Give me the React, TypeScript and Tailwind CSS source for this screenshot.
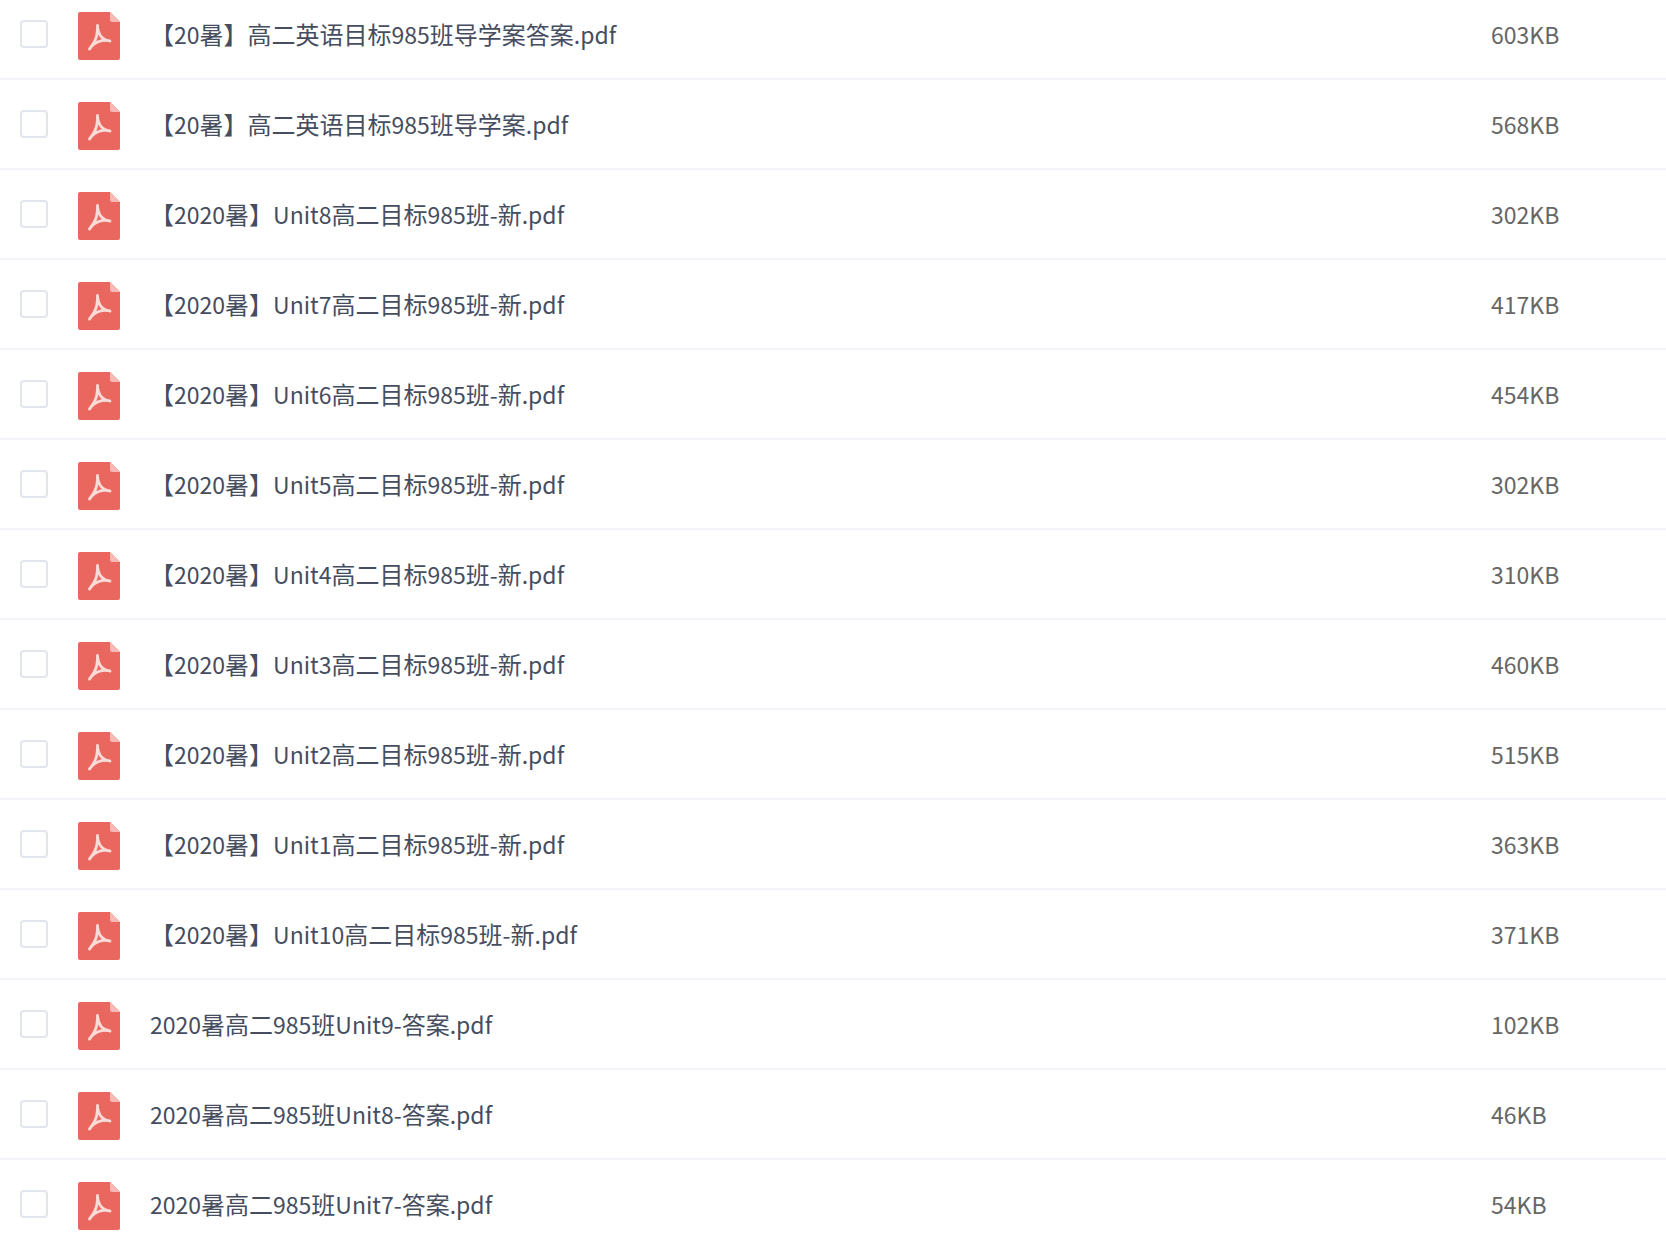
const files = [
  { name: "【20暑】高二英语目标985班导学案答案.pdf", size: "603KB" },
  { name: "【20暑】高二英语目标985班导学案.pdf", size: "568KB" },
  { name: "【2020暑】Unit8高二目标985班-新.pdf", size: "302KB" },
  { name: "【2020暑】Unit7高二目标985班-新.pdf", size: "417KB" },
  { name: "【2020暑】Unit6高二目标985班-新.pdf", size: "454KB" },
  { name: "【2020暑】Unit5高二目标985班-新.pdf", size: "302KB" },
  { name: "【2020暑】Unit4高二目标985班-新.pdf", size: "310KB" },
  { name: "【2020暑】Unit3高二目标985班-新.pdf", size: "460KB" },
  { name: "【2020暑】Unit2高二目标985班-新.pdf", size: "515KB" },
  { name: "【2020暑】Unit1高二目标985班-新.pdf", size: "363KB" },
  { name: "【2020暑】Unit10高二目标985班-新.pdf", size: "371KB" },
  { name: "2020暑高二985班Unit9-答案.pdf", size: "102KB" },
  { name: "2020暑高二985班Unit8-答案.pdf", size: "46KB" },
  { name: "2020暑高二985班Unit7-答案.pdf", size: "54KB" },
];

// latin runs sit a touch smaller than the CJK ones
function FileName({ name }: { name: string }) {
  const runs = name.match(/[\x20-\x7e]+|[^\x20-\x7e]+/g) ?? [];
  return (
    <>
      {runs.map((run, i) =>
        /^[\x20-\x7e]/.test(run) ? (
          <span key={i} className="text-[23px]">
            {run}
          </span>
        ) : (
          <span key={i}>{run}</span>
        ),
      )}
    </>
  );
}

function PdfIcon() {
  return (
    <svg width="42" height="48" viewBox="0 0 42 48" className="shrink-0">
      <path d="M2 0H32L42 10V46a2 2 0 0 1-2 2H2a2 2 0 0 1-2-2V2a2 2 0 0 1 2-2Z" fill="#ea675f" />
      <path d="M32 0L42 10H34a2 2 0 0 1-2-2Z" fill="#f6b9b5" />
      <path
        d="M19.5 13.5C19.5 22 19 28 11.5 37M19.5 13.5C20 22 24 28 32 29C26 27 17 29 11.5 37"
        fill="none"
        stroke="#fadbd8"
        strokeWidth="2.8"
        strokeLinecap="round"
        strokeLinejoin="round"
      />
    </svg>
  );
}

export default function App() {
  return (
    <div className="h-[1244px] overflow-hidden bg-white font-['Noto_Sans_CJK_SC',sans-serif]">
      <div className="-mt-[10px]">
        {files.map((f, i) => (
          <div key={i} className="flex h-[90px] items-center border-b-2 border-[#f3f4f7] pt-1">
            <div className="ml-5 mb-[5px] h-7 w-7 shrink-0 rounded-[4px] border-2 border-[#e2e5ec] bg-white" />
            <div className="ml-[30px]">
              <PdfIcon />
            </div>
            <div className="ml-[30px] flex-1 text-2xl leading-8 mb-[5px] text-[#454d5f]">
              <FileName name={f.name} />
            </div>
            <div className="w-[175px] shrink-0 text-[23px] leading-8 mb-[5px] text-[#666666]">{f.size}</div>
          </div>
        ))}
      </div>
    </div>
  );
}
